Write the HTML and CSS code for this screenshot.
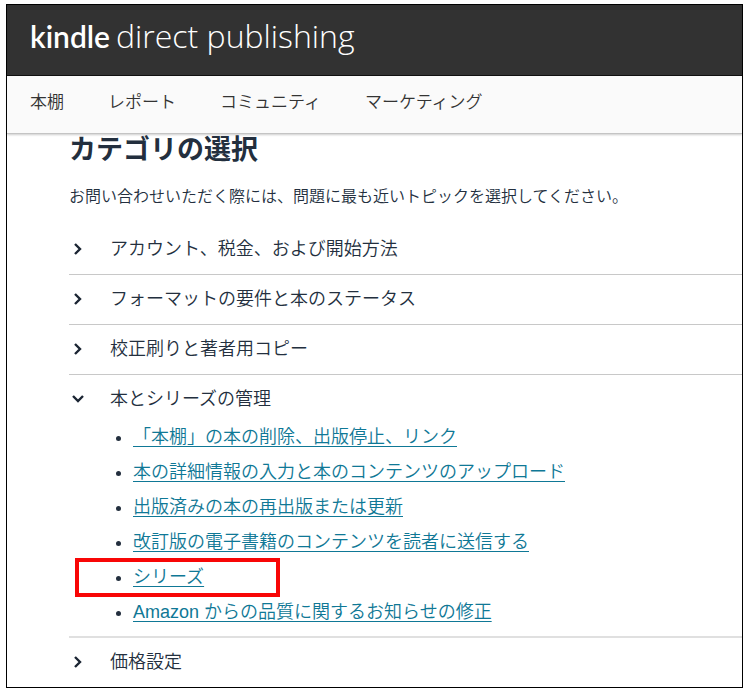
FILE: index.html
```html
<!DOCTYPE html>
<html lang="ja">
<head>
<meta charset="utf-8">
<meta name="viewport" content="width=device-width, initial-scale=1">
<title>kindle direct publishing</title>
<link rel="stylesheet" href="styles.css">
</head>
<body>
<div class="frame">
  <header class="masthead">
    <a class="logo" href="#"><strong>kindle</strong> <span>direct publishing</span></a>
  </header>
  <nav class="nav">
    <a href="#">本棚</a>
    <a href="#">レポート</a>
    <a href="#">コミュニティ</a>
    <a href="#">マーケティング</a>
  </nav>
  <main class="content">
    <h1>カテゴリの選択</h1>
    <p class="lead">お問い合わせいただく際には、問題に最も近いトピックを選択してください。</p>
    <section class="topic">
      <button type="button" class="toggle" aria-expanded="false"><svg class="chevron" viewBox="0 0 16 16" aria-hidden="true"><path d="M6 5l5 5-5 5"/></svg>アカウント、税金、および開始方法</button>
    </section>
    <section class="topic">
      <button type="button" class="toggle" aria-expanded="false"><svg class="chevron" viewBox="0 0 16 16" aria-hidden="true"><path d="M6 5l5 5-5 5"/></svg>フォーマットの要件と本のステータス</button>
    </section>
    <section class="topic">
      <button type="button" class="toggle" aria-expanded="false"><svg class="chevron" viewBox="0 0 16 16" aria-hidden="true"><path d="M6 5l5 5-5 5"/></svg>校正刷りと著者用コピー</button>
    </section>
    <section class="topic open">
      <button type="button" class="toggle" aria-expanded="true"><svg class="chevron" viewBox="0 0 16 16" aria-hidden="true"><path d="M4 7l5 5 5-5"/></svg>本とシリーズの管理</button>
      <ul class="links">
        <li><a href="#">「本棚」の本の削除、出版停止、リンク</a></li>
        <li><a href="#">本の詳細情報の入力と本のコンテンツのアップロード</a></li>
        <li><a href="#">出版済みの本の再出版または更新</a></li>
        <li><a href="#">改訂版の電子書籍のコンテンツを読者に送信する</a></li>
        <li class="marked"><a href="#">シリーズ</a></li>
        <li><a href="#">Amazon からの品質に関するお知らせの修正</a></li>
      </ul>
    </section>
    <section class="topic">
      <button type="button" class="toggle" aria-expanded="false"><svg class="chevron" viewBox="0 0 16 16" aria-hidden="true"><path d="M6 5l5 5-5 5"/></svg>価格設定</button>
    </section>
  </main>
</div>
</body>
</html>
```
FILE: styles.css
```css
*,
*::after {
  box-sizing: border-box;
}

body {
  margin: 0;
  padding: 4px 11px 9px 6px;
  background: #fff;
  color: #232f3e;
  font-family: "Liberation Sans", "Noto Sans CJK JP", sans-serif;
  font-weight: 350;
}

.frame {
  border: 1px solid #000;
}

.masthead {
  display: flex;
  align-items: center;
  height: 71px;
  padding: 0 23px 8px;
  background: #323232;
  border-bottom: 1px solid #111;
}

.logo {
  display: flex;
  align-items: baseline;
  gap: 6px;
  color: #fff;
  font-family: "Open Sans", sans-serif;
  font-size: 32px;
  font-weight: 300;
  line-height: 40px;
  text-decoration: none;
  white-space: nowrap;
}

.logo strong {
  font-family: Lato, sans-serif;
  font-size: 30px;
  font-weight: 600;
}

.nav {
  display: flex;
  gap: 44px;
  padding: 13px 23px 16px;
  background: #fafafa;
  border-bottom: 1px solid #c4c4c4;
  box-shadow: 0 1px 2px rgba(0, 0, 0, 0.2);
}

.nav a {
  color: #333;
  font-size: 17px;
  line-height: 28px;
  text-decoration: none;
}

.content {
  padding-left: 62px;
}

h1 {
  margin: 0;
  font-size: 27px;
  font-weight: 700;
  line-height: 33px;
}

.lead {
  margin: 18px 0 16px;
  font-size: 16px;
  line-height: 24px;
}

.topic + .topic {
  border-top: 1px solid #c8c8c8;
}

.topic.open + .topic {
  border-top: 2px solid #e0e0e0;
}

.toggle {
  display: flex;
  align-items: center;
  gap: 25px;
  width: 100%;
  height: 49px;
  padding: 0 0 5px;
  border: 0;
  background: none;
  color: inherit;
  font: inherit;
  font-size: 18px;
  text-align: left;
  cursor: pointer;
}

.chevron {
  flex: none;
  width: 16px;
  height: 16px;
  fill: none;
  stroke: #1b2533;
  stroke-width: 2.4;
}

.links {
  margin: -4px 0 0;
  padding: 0 0 6px 64px;
  font-size: 18px;
  line-height: 35px;
}

.links a {
  color: #0f7896;
  text-decoration: underline;
  text-underline-offset: 3px;
}

.marked {
  position: relative;
}

.marked::after {
  content: "";
  position: absolute;
  top: -2px;
  left: -58px;
  width: 205px;
  height: 39px;
  border: 4px solid #f80606;
  pointer-events: none;
}
```
